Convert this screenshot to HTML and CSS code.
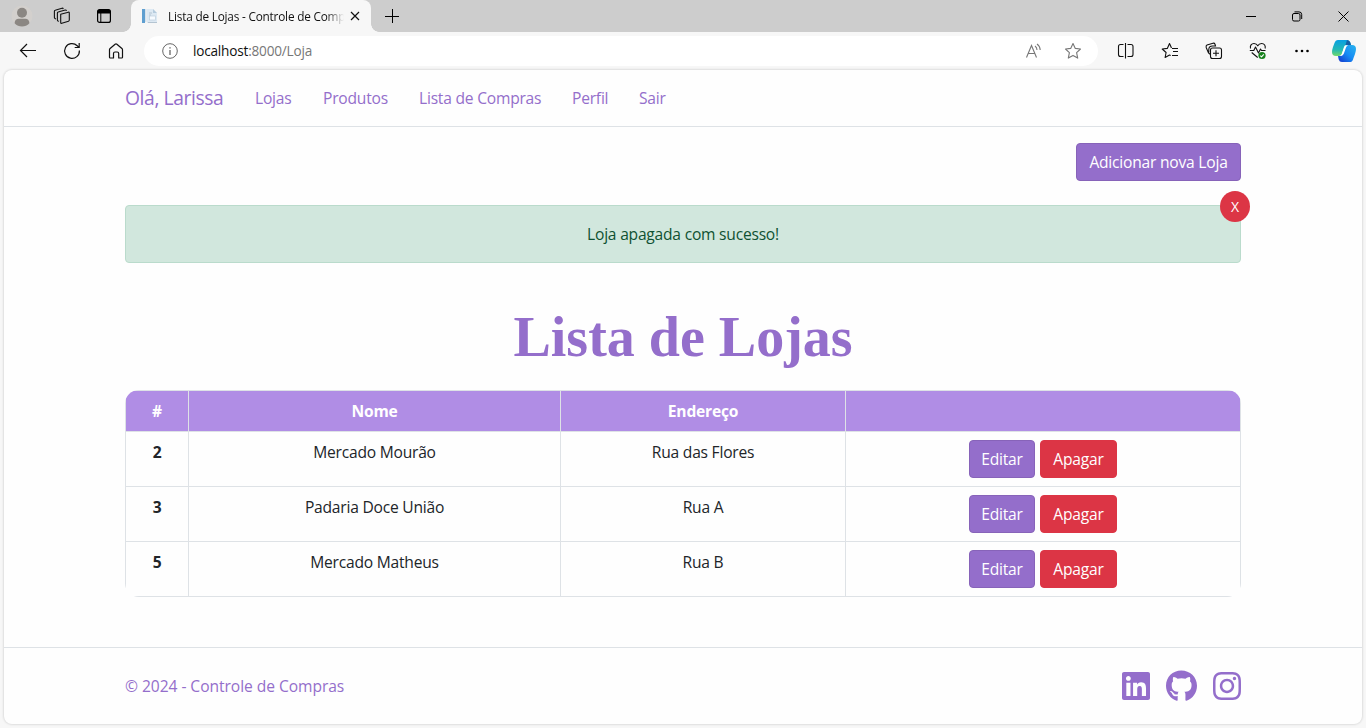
FILE: index.html
```html
<!DOCTYPE html>
<html lang="pt-BR">
<head>
<meta charset="utf-8">
<title>Lista de Lojas - Controle de Compras</title>
<link rel="stylesheet" href="styles.css">
</head>
<body>
<div class="browser">
  <div class="tabstrip">
    <svg class="avatar" width="22" height="22" viewBox="0 0 22 22"><circle cx="11" cy="11" r="10.5" fill="#d3d0cd"/><circle cx="11" cy="7.700" r="5" fill="#8b8783"/><path d="M3.600 18.200c0-3 2-4.400 4-4.400h6.800c2 0 4 1.400 4 4.400-2 2.100-4.600 3.300-7.400 3.300s-5.400-1.200-7.400-3.300z" fill="#8b8783"/></svg>
    <svg class="workspaces" width="18" height="18" viewBox="0 0 18 18" fill="none" stroke="#111" stroke-width="1.100" stroke-linejoin="round"><path d="M7.700 7.200l7.600-2q1-.2 1 .8v7.100q0 .8-.8 1.100l-6.700 2.100q-1.100.3-1.100-.8z"/><path d="M6 14.300l-1-.4q-.6-.3-.6-1V6q0-.8.8-1l7-2q1-.2 1.300.9"/><path d="M3 12l-1-.5q-.6-.4-.6-1V4.200q0-.8.8-1L9 1.200q1-.2 1.300.8"/></svg>
    <svg class="tabmenu" width="16" height="16" viewBox="0 0 16 16"><rect x="1.600" y="1.600" width="12.800" height="12.800" rx="2" fill="none" stroke="#000" stroke-width="1.200"/><path d="M1.600 5.500V3.600q0-2 2-2h8.800q2 0 2 2v1.900z"/><path d="M4.800 5v9.400" stroke="#000"/></svg>
    <div class="tab">
      <svg class="favicon" width="16" height="16" viewBox="0 0 16 16"><rect x="0" y="1" width="3" height="14" fill="#5f9fd0"/><rect x="3" y="1" width="1.500" height="13" fill="#d6e2ec"/><path d="M5 1h6l4 4v10H5z" fill="#dde9f3"/><path d="M11 1v4h4z" fill="#b5cbdd"/><path d="M7 5h3M7 7h2M6 14.500h9" stroke="#b4c4d1"/><rect x="7.500" y="8" width="6" height="4" fill="#f7fbff" stroke="#bdcfdd" stroke-width=".7"/></svg>
      <span class="tab-title">Lista de Lojas - Controle de Comp</span>
      <svg class="tab-close" width="10" height="10" viewBox="0 0 10 10" stroke="#111" stroke-width="1.200"><path d="M1 1l8 8M9 1l-8 8"/></svg>
    </div>
    <svg class="newtab" width="14" height="14" viewBox="0 0 14 14" stroke="#000"><path d="M7.500 0v14M0 7.500h14"/></svg>
    <div class="window-buttons">
      <svg width="11" height="11" viewBox="0 0 11 11" stroke="#000"><path d="M0 5.500h10"/></svg>
      <svg width="11" height="11" viewBox="0 0 11 11" fill="none" stroke="#000"><rect x=".5" y="2.500" width="7.500" height="7.500" rx="1.500"/><path d="M2.500.9H7q2.700 0 2.700 2.600v4.500"/></svg>
      <svg width="11" height="11" viewBox="0 0 11 11" stroke="#000"><path d="M.5.5l10 10M10.500.5l-10 10"/></svg>
    </div>
  </div>
  <div class="toolbar">
    <div class="nav-icons">
      <svg width="18" height="18" viewBox="0 0 18 18" fill="none" stroke="#111" stroke-width="1.200"><path d="M17 8.500H1.500M8 2L1.500 8.500 8 15"/></svg>
      <svg width="18" height="18" viewBox="0 0 18 18" fill="none" stroke="#111" stroke-width="1.200"><path d="M16.400 8.500a7.400 7.400 0 1 1-2.200-4.800l1.800 1.700M16.200 1v4.500h-4.500"/></svg>
      <svg width="18" height="18" viewBox="0 0 18 18" fill="none" stroke="#111" stroke-width="1.200" stroke-linejoin="round"><path d="M2.500 7.800q0-.8.600-1.300l5-4.300q.9-.7 1.800 0l5 4.300q.6.500.6 1.300v7.400q0 .8-.8.800h-3v-4.500q0-1.500-1.500-1.500H8q-1.500 0-1.500 1.500V16h-3q-1 0-1-.8z"/></svg>
    </div>
    <div class="address">
      <svg class="info" width="16" height="16" viewBox="0 0 16 16" fill="none" stroke="#666"><circle cx="8" cy="8" r="7.300"/><path d="M8 7v5" stroke-width="1.300"/><path d="M8 4.200v1.400" stroke-width="1.400"/></svg>
      <span class="url"><span class="host">localhost</span>:8000/Loja</span>
      <svg class="read" width="17" height="17" viewBox="0 0 17 17" fill="none" stroke="#777" stroke-width="1.100"><path d="M1.500 14.500L6.500 2.500l5 12M3.200 10.500h6.600M10 3q2 1.500 2 4M12 1q3 2 3.200 6"/></svg>
      <svg class="star" width="18" height="18" viewBox="0 0 18 18" fill="none" stroke="#777" stroke-width="1.100" stroke-linejoin="round"><path d="M9 1.500l2.300 4.900 5.200.6-3.900 3.600 1.100 5.500L9 13.400l-4.700 2.700 1.100-5.500L1.500 7l5.200-.6z"/></svg>
    </div>
    <div class="tools">
      <svg width="18" height="18" viewBox="0 0 18 18" fill="none" stroke="#111" stroke-width="1.100"><path d="M6.500 2.500H3.500Q1.500 2.500 1.500 4.500v8q0 2 2 2H6.500M10.500 2.500h3.500q2 0 2 2v8q0 2-2 2H10.500M8.500 1v15.500"/></svg>
      <svg width="18" height="18" viewBox="0 0 18 18" fill="none" stroke="#111" stroke-width="1.100" stroke-linejoin="round"><path d="M11 6.500h6M12 9.500h5M11 13.500h6M9.700 13.500L8.500 13l-4.400 2.500 1-5L1.200 7l5.100-.6L8.500 1.500 10.500 6"/></svg>
      <svg width="18" height="18" viewBox="0 0 18 18" fill="none" stroke="#111" stroke-width="1.100"><rect x="5.500" y="6" width="11" height="10.500" rx="2"/><path d="M11 8.200v6M8 11.200h6M5.500 12.500L3.500 11 1.200 5.500Q.7 3.700 2 3L8 1.200q1.500-.3 2 1L10.500 4H7.500Q3.800 4 3.800 7.500v3"/></svg>
      <svg width="18" height="18" viewBox="0 0 18 18" fill="none" stroke="#111" stroke-width="1.100" stroke-linejoin="round"><path d="M1.500 6.500C.8 3.500 2.500 1.500 5 1.500q2.500 0 3.800 2.300Q10 1.500 12.600 1.500c2.800 0 4.200 2.300 3.500 5M.8 8.500h4L6.500 5l3 6 2-4 1 1.500h4M2.700 10.500l6 5"/><circle cx="13" cy="13.500" r="3.600" fill="#16811b" stroke="none"/><path d="M11.300 13.600l1.200 1.200 2.300-2.500" stroke="#fff"/></svg>
      <svg width="18" height="18" viewBox="0 0 18 18"><circle cx="3.500" cy="9" r="1.300"/><circle cx="9" cy="9" r="1.300"/><circle cx="14.500" cy="9" r="1.300"/></svg>
    </div>
    <svg class="copilot" width="26" height="24" viewBox="0 0 26 24"><defs><linearGradient id="teal" x1="0" y1="0" x2="0" y2="1"><stop offset="0" stop-color="#079fe3"/><stop offset=".6" stop-color="#24b8b4"/><stop offset="1" stop-color="#72d96b"/></linearGradient><linearGradient id="blue" x1="0" y1="1" x2="1" y2="0"><stop offset="0" stop-color="#1433ca"/><stop offset=".5" stop-color="#168cf5"/><stop offset="1" stop-color="#29b4ed"/></linearGradient></defs><path d="M7 1h9q2.500 0 3.300 2.500L20 6h-3q-3 0-4 3l-2 6q-.8 2-3 2H5q-4 0-4-4 0-2 1-5l1.500-4Q4.500 1 7 1z" fill="url(#teal)"/><path d="M16 1q2.500 0 3.300 2.500L20 6h-3q-2 0-3 1.500Z" fill="#155fa5"/><path d="M19.500 23H11q-2.500 0-3.300-2.500L7 17h1.500q2.500 0 3.500-3l2-6q1-2 3-2h4q4 0 4 4 0 2-1 5l-1.500 4Q21.500 23 19.500 23z" fill="url(#blue)"/><path d="M14 6.300h3q-1.500.7-2 2.200l-2.200 6.300q-.8 2-2.800 2.200H8.500q1.700-.5 2.300-2.300L13 8z" fill="#fff"/></svg>
  </div>
  <div class="page">
    <header class="navbar">
      <div class="container nav">
        <a class="brand">Olá, Larissa</a>
        <a class="link lojas">Lojas</a>
        <a class="link produtos">Produtos</a>
        <a class="link compras">Lista de Compras</a>
        <a class="link perfil">Perfil</a>
        <a class="link">Sair</a>
      </div>
    </header>
    <main class="container content">
      <div class="actions"><a class="btn btn-primary btn-add">Adicionar nova Loja</a></div>
      <div class="alert"><span class="alert-text">Loja apagada com sucesso!</span><a class="alert-close">X</a></div>
      <h1>Lista de Lojas</h1>
      <div class="table-wrap">
        <div class="table">
          <div class="row head"><div class="cell">#</div><div class="cell">Nome</div><div class="cell">Endereço</div><div class="cell"></div></div>
          <div class="row"><div class="cell id">2</div><div class="cell">Mercado Mourão</div><div class="cell">Rua das Flores</div><div class="cell buttons"><a class="btn btn-primary btn-edit">Editar</a><a class="btn btn-danger">Apagar</a></div></div>
          <div class="row"><div class="cell id">3</div><div class="cell">Padaria Doce União</div><div class="cell">Rua A</div><div class="cell buttons"><a class="btn btn-primary btn-edit">Editar</a><a class="btn btn-danger">Apagar</a></div></div>
          <div class="row"><div class="cell id">5</div><div class="cell">Mercado Matheus</div><div class="cell">Rua B</div><div class="cell buttons"><a class="btn btn-primary btn-edit">Editar</a><a class="btn btn-danger">Apagar</a></div></div>
        </div>
      </div>
    </main>
    <footer class="footer">
      <div class="container foot">
        <span class="copy">© 2024 - Controle de Compras</span>
        <div class="social">
          <svg width="28" height="32" viewBox="0 0 448 512"><path d="M416 32H31.900C14.300 32 0 46.500 0 64.300v383.400C0 465.500 14.300 480 31.900 480H416c17.600 0 32-14.500 32-32.300V64.300c0-17.800-14.400-32.300-32-32.300zM135.400 416H69V202.200h66.500V416zm-33.200-243c-21.300 0-38.500-17.300-38.500-38.500S80.900 96 102.200 96c21.200 0 38.500 17.300 38.500 38.500 0 21.300-17.200 38.500-38.500 38.500zm282.100 243h-66.400V312c0-24.800-.5-56.700-34.500-56.700-34.600 0-39.900 27-39.900 54.900V416h-66.400V202.200h63.700v29.200h.9c8.900-16.800 30.600-34.500 62.900-34.500 67.200 0 79.700 44.300 79.700 101.900V416z"/></svg>
          <svg width="31" height="32" viewBox="0 0 496 512"><path d="M165.900 397.400c0 2-2.300 3.600-5.200 3.600-3.300.3-5.600-1.300-5.600-3.600 0-2 2.300-3.600 5.200-3.600 3-.3 5.600 1.300 5.600 3.600zm-31.100-4.500c-.7 2 1.300 4.300 4.300 4.900 2.600 1 5.600 0 6.200-2s-1.300-4.300-4.300-5.200c-2.600-.7-5.500.3-6.200 2.300zm44.200-1.700c-2.900.7-4.900 2.600-4.600 4.900.3 2 2.900 3.300 5.900 2.600 2.900-.7 4.900-2.600 4.600-4.600-.3-1.900-3-3.200-5.900-2.900zM244.800 8C106.100 8 0 113.300 0 252c0 110.900 69.800 205.800 169.500 239.200 12.800 2.300 17.300-5.600 17.300-12.100 0-6.200-.3-40.400-.3-61.400 0 0-70 15-84.700-29.800 0 0-11.400-29.100-27.800-36.600 0 0-22.900-15.700 1.600-15.400 0 0 24.900 2 38.600 25.800 21.900 38.600 58.600 27.500 72.900 20.900 2.300-16 8.800-27.100 16-33.700-55.900-6.200-112.300-14.300-112.300-110.500 0-27.500 7.600-41.300 23.600-58.900-2.600-6.500-11.100-33.300 2.600-67.900 20.900-6.500 69 27 69 27 20-5.600 41.500-8.500 62.800-8.500s42.800 2.900 62.800 8.500c0 0 48.100-33.600 69-27 13.700 34.700 5.200 61.400 2.600 67.900 16 17.700 25.800 31.500 25.800 58.900 0 96.500-58.900 104.200-114.800 110.500 9.200 7.900 17 22.900 17 46.400 0 33.700-.3 75.400-.3 83.600 0 6.500 4.600 14.400 17.300 12.100C428.200 457.800 496 362.900 496 252 496 113.300 383.500 8 244.800 8z"/></svg>
          <svg width="28" height="32" viewBox="0 0 448 512"><path d="M224.100 141c-63.600 0-114.900 51.300-114.900 114.900s51.300 114.900 114.900 114.900S339 319.500 339 255.900 287.700 141 224.100 141zm0 189.600c-41.100 0-74.700-33.500-74.700-74.700s33.500-74.700 74.700-74.700 74.700 33.500 74.700 74.700-33.600 74.700-74.700 74.700zm146.400-194.300c0 14.900-12 26.800-26.800 26.800-14.900 0-26.800-12-26.800-26.800s12-26.800 26.800-26.800 26.800 12 26.800 26.800zm76.100 27.200c-1.700-35.900-9.900-67.700-36.200-93.900-26.200-26.200-58-34.400-93.900-36.200-37-2.100-147.900-2.100-184.900 0-35.800 1.700-67.600 9.900-93.900 36.100s-34.400 58-36.200 93.900c-2.100 37-2.100 147.900 0 184.900 1.700 35.900 9.900 67.700 36.200 93.900s58 34.400 93.900 36.200c37 2.100 147.900 2.100 184.900 0 35.900-1.700 67.700-9.900 93.900-36.200 26.200-26.200 34.400-58 36.200-93.900 2.100-37 2.100-147.800 0-184.800zM398.800 388c-7.800 19.600-22.900 34.700-42.600 42.600-29.500 11.700-99.500 9-132.100 9s-102.700 2.600-132.100-9c-19.600-7.800-34.700-22.900-42.600-42.600-11.700-29.500-9-99.500-9-132.100s-2.600-102.700 9-132.100c7.800-19.600 22.900-34.700 42.600-42.600 29.500-11.700 99.500-9 132.100-9s102.700-2.600 132.100 9c19.600 7.800 34.700 22.900 42.600 42.600 11.700 29.500 9 99.500 9 132.100s2.700 102.700-9 132.100z"/></svg>
        </div>
      </div>
    </footer>
  </div>
</div>
</body>
</html>
```
FILE: styles.css
```css
* { box-sizing: border-box; }
body { margin: 0; font: 15.6px/24px "Open Sans", "Noto Sans", sans-serif; letter-spacing: -0.22px; color: #212529; }
svg { display: block; flex: none; }
.browser { width: 1366px; height: 728px; background: #f7f7f7; display: flex; flex-direction: column; overflow: hidden; }

.tabstrip { height: 32px; flex: none; background: #cdcdcd; display: flex; align-items: center; padding-left: 11px; }
.workspaces { margin-left: 20px; }
.tabmenu { margin-left: 25px; }
.tab { position: relative; width: 240px; height: 32px; margin-left: 19px; background: #f7f7f7; border-radius: 8px 8px 0 0; display: flex; align-items: center; padding: 0 11px; }
.tab::before, .tab::after { content: ""; position: absolute; bottom: 0; width: 8px; height: 8px; }
.tab::before { left: -8px; background: radial-gradient(circle at 0 0, #cdcdcd 7.5px, #f7f7f7 8px); }
.tab::after { right: -8px; background: radial-gradient(circle at 100% 0, #cdcdcd 7.5px, #f7f7f7 8px); }
.tab-title { width: 176px; margin-left: 10px; font-size: 11.8px; letter-spacing: -0.2px; color: #111; white-space: nowrap; -webkit-mask-image: linear-gradient(90deg, #000 158px, transparent 176px); mask-image: linear-gradient(90deg, #000 158px, transparent 176px); }
.tab-close { margin-left: 6px; }
.newtab { margin-left: 14px; }
.window-buttons { margin-left: auto; display: flex; gap: 35px; padding-right: 17px; }

.toolbar { height: 38px; flex: none; display: flex; align-items: center; padding: 0 10px 0 19px; }
.nav-icons { display: flex; gap: 26px; }
.address { width: 954px; height: 30px; margin-left: 19px; background: #fff; border-radius: 15px; display: flex; align-items: center; padding: 0 16px 0 18px; }
.url { margin-left: 15px; font-size: 13.6px; letter-spacing: -0.2px; color: #777; }
.host { color: #111; }
.read { margin-left: auto; }
.star { margin-left: 22px; }
.tools { display: flex; gap: 26px; margin-left: 19px; }
.copilot { margin-left: auto; margin-right: -1px; }

.page { width: 1358px; height: 654px; margin-left: 4px; background: #fefefe; border-radius: 8px; box-shadow: 0 0 2px 1px rgba(0,0,0,.1); display: flex; flex-direction: column; }
.container { width: 1140px; margin: 0 auto; padding: 0 12px; }
.navbar { height: 57px; border-bottom: 1px solid #dee2e6; }
.nav { height: 56px; display: flex; align-items: center; color: #946ecb; }
.brand { font-size: 19.3px; width: 98px; white-space: nowrap; letter-spacing: -0.4px; }
.link { margin-left: 32px; white-space: nowrap; }
.lojas { width: 36px; }
.produtos { width: 64px; }
.compras { width: 121px; }
.perfil { width: 35px; }

.content { flex: 1; padding-top: 16px; }
.actions { display: flex; justify-content: flex-end; }
.btn { height: 38px; border: 1px solid #8763b9; border-radius: 4px; display: flex; align-items: center; justify-content: center; color: #fff; }
.btn-primary { background: #946ecb; }
.btn-danger { width: 77px; background: #dc3545; border-color: #dc3545; }
.btn-add { width: 165px; }
.btn-edit { width: 66px; }
.alert { position: relative; height: 58px; margin-top: 24px; background: #d1e7dd; border: 1px solid #badbcc; border-radius: 4px; color: #0f5132; display: flex; align-items: center; justify-content: center; }
.alert-close { position: absolute; right: -10px; top: -15px; width: 30px; height: 31px; border-radius: 50%; background: #dc3545; color: #fff; font-size: 14px; display: flex; align-items: center; justify-content: center; }
h1 { margin: 41px 0 19px; font: bold 56px/67px "Liberation Serif", serif; letter-spacing: 0; text-align: center; color: #946ecb; }
.table-wrap { border-radius: 14px; overflow: hidden; }
.table { border: 1px solid #dee2e6; }
.row { display: grid; grid-template-columns: 63px 372px 285px 1fr; height: 55px; border-bottom: 1px solid #dee2e6; text-align: center; }
.row:last-child { height: 54px; border-bottom: 0; }
.cell { padding-top: 8px; border-right: 1px solid #dee2e6; }
.cell:last-child { border-right: 0; }
.head { height: 41px; background: #b08de5; color: #fff; font-weight: 700; }
.id { font-weight: 700; }
.buttons { display: flex; justify-content: center; gap: 5px; }

.footer { height: 77px; border-top: 1px solid #dee2e6; }
.foot { height: 76px; display: flex; align-items: center; justify-content: space-between; color: #946ecb; }
.copy { letter-spacing: -0.05px; }
.social { display: flex; gap: 16px; fill: #946ecb; }
```
